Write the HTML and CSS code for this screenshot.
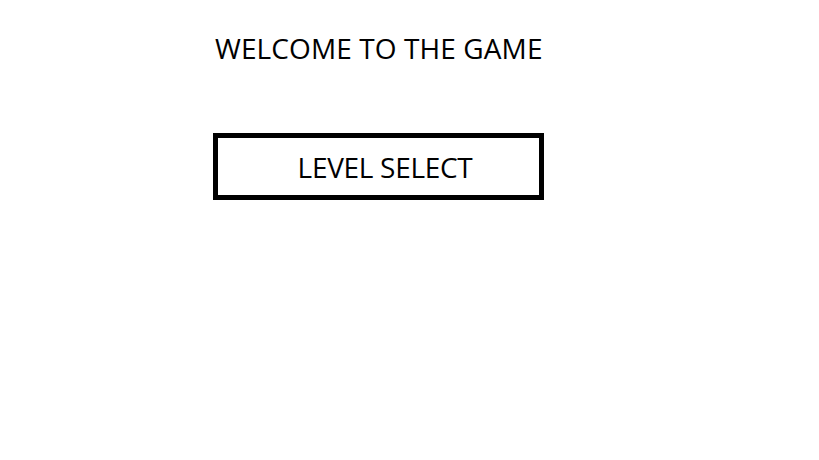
FILE: index.html
```html
<!DOCTYPE html>
<html>
<head>
<meta charset="utf-8">
<link rel="stylesheet" href="styles.css">
</head>
<body>
<main class="menu">
  <h1 class="title">WELCOME TO THE GAME</h1>
  <button class="level-btn">LEVEL SELECT</button>
</main>
</body>
</html>
```
FILE: styles.css
```css
html, body {
  margin: 0;
  padding: 0;
  background: #fff;
}
.menu {
  display: flex;
  flex-direction: column;
  align-items: flex-start;
  padding: 29px 0 0 213px;
  font-family: "Open Sans", sans-serif;
  color: #000;
}
.title {
  margin: 0 0 0 2px;
  font-size: 28px;
  font-weight: 400;
  line-height: 39px;
  letter-spacing: 0.1px;
}
.level-btn {
  margin-top: 65px;
  box-sizing: border-box;
  width: 331px;
  height: 67px;
  border: 5px solid #000;
  background: #fff;
  font-family: "Open Sans", sans-serif;
  font-size: 28px;
  letter-spacing: -0.3px;
  color: #000;
  padding: 0 0 0 13px;
}
```
